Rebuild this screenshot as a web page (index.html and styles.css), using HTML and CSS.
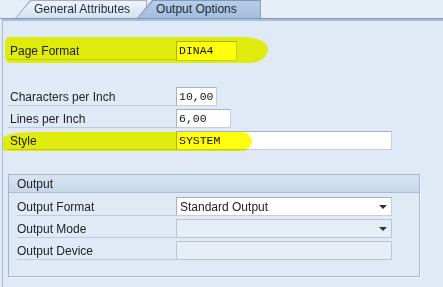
FILE: index.html
```html
<!DOCTYPE html>
<html>
  <head>
    <meta charset="UTF-8" />
    <title>Output Options</title>
    <link rel="stylesheet" href="styles.css">
  </head>
  <body>
    <!-- Tab strip -->
    <div class="tabs">
      <div class="tab"><div class="tab-in">General Attributes</div></div>
      <div class="tab active"><div class="tab-in">Output Options</div></div>
    </div>

    <div class="panel">
      <div class="form">
        <div class="row first">
          <span class="label">Page Format</span>
          <span class="field mono w-page">DINA4</span>
        </div>
        <div class="row gap">
          <span class="label">Characters per Inch</span>
          <span class="field mono w-chars">10,00</span>
        </div>
        <div class="row">
          <span class="label">Lines per Inch</span>
          <span class="field mono w-lines">6,00</span>
        </div>
        <div class="row">
          <span class="label">Style</span>
          <span class="field mono w-wide">SYSTEM</span>
        </div>
      </div>

      <!-- Output group -->
      <div class="group">
        <div class="group-head">Output</div>
        <div class="group-body">
          <div class="row">
            <span class="label">Output Format</span>
            <span class="field w-wide select">Standard Output</span>
          </div>
          <div class="row">
            <span class="label">Output Mode</span>
            <span class="field w-wide select disabled"></span>
          </div>
          <div class="row">
            <span class="label">Output Device</span>
            <span class="field w-wide disabled"></span>
          </div>
        </div>
      </div>

      <!-- marker highlights drawn over the screen -->
      <div class="marker marker-page"></div>
      <div class="marker marker-style"></div>
    </div>
  </body>
</html>
```

FILE: styles.css
```css
body {
  margin: 0;
  width: 443px;
  height: 287px;
  overflow: hidden;
  font-family: "Liberation Sans", Arial, sans-serif;
  font-size: 12px;
  color: #222;
  background-color: #dfeaf6;
}

/* tab strip */
.tabs {
  display: flex;
  align-items: flex-end;
  height: 18px;
  padding-left: 15px;
  background-color: #e6eef7;
  border-bottom: 1px solid #7f99ba;
}

.tab {
  height: 17px;
  padding: 1px 1px 0 1px;
  background-color: #9fb2c8;
  clip-path: polygon(0 100%, 15px 0, 100% 0, 100% 100%);
}

.tab-in {
  height: 17px;
  line-height: 17px;
  padding: 0 16px 0 18px;
  background: linear-gradient(#eef3f9, #d5e2f0);
  color: #1d2b3b;
  clip-path: polygon(0 100%, 15px 0, 100% 0, 100% 100%);
  white-space: nowrap;
}

.tab.active {
  margin-left: -10px;
  background-color: #7f99ba;
  position: relative;
  z-index: 1;
}

.tab.active .tab-in {
  padding: 0 23px 0 18px;
  background: linear-gradient(#b8cde6, #a3bddc);
}

/* main panel */
.panel {
  position: relative;
  height: 266px;
  margin-left: 2px;
  border-top: 2px solid #a8bedb;
  border-left: 1px solid #aabcd0;
  background-color: #dfeaf6;
}

.form {
  padding: 19px 0 0 5px;
}

.row {
  display: grid;
  grid-template-columns: 168px auto;
  height: 22px;
  align-items: start;
}

.row.gap {
  margin-top: 24px;
}

.label {
  height: 19px;
  line-height: 22px;
  padding-left: 2px;
  border-bottom: 1px solid #bccbdc;
  white-space: nowrap;
}

.field {
  box-sizing: border-box;
  position: relative;
  height: 19px;
  margin-top: 1px;
  line-height: 18px;
  padding-left: 3px;
  background-color: #fff;
  border: 1px solid #a4b2c3;
  border-bottom-color: #c4cfdb;
  border-right-color: #c4cfdb;
  white-space: nowrap;
}

.row.first .field {
  height: 20px;
}

.mono {
  font-family: "Liberation Mono", "Courier New", monospace;
  font-size: 11.5px;
  padding-left: 2px;
  color: #111;
}

.w-page { width: 61px; }
.w-chars { width: 41px; }
.w-lines { width: 55px; }
.w-wide { width: 216px; }

.field.disabled {
  background-color: #e6edf4;
  border-color: #b9c6d4;
}

.select::after {
  content: "";
  position: absolute;
  right: 4px;
  top: 7px;
  border-left: 4px solid transparent;
  border-right: 4px solid transparent;
  border-top: 4px solid #2a3440;
}

/* output group box */
.group {
  width: 410px;
  margin: 22px 0 0 5px;
  border: 1px solid #a3b6cb;
  box-shadow: 1px 1px 0 #f1f6fb;
}

.group-head {
  height: 17px;
  line-height: 18px;
  padding-left: 8px;
  background: linear-gradient(#d7e4f2, #c6d7eb);
  border-bottom: 1px solid #a9bcd2;
}

.group-body {
  padding: 3px 0 14px 8px;
}

.group-body .row {
  grid-template-columns: 159px auto;
}

.group-body .label {
  padding-left: 0;
}

/* yellow marker strokes */
.marker {
  position: absolute;
  background-color: #ffff00;
  mix-blend-mode: darken;
  opacity: 0.95;
  pointer-events: none;
}

.marker-page {
  left: 2px;
  top: 16px;
  width: 263px;
  height: 26px;
  border-radius: 3px 24px 18px 5px / 6px 12px 14px 6px;
}

.marker-style {
  left: 0;
  top: 111px;
  width: 249px;
  height: 19px;
  border-radius: 30px 10px 10px 2px / 7px 9px 10px 3px;
}
```
